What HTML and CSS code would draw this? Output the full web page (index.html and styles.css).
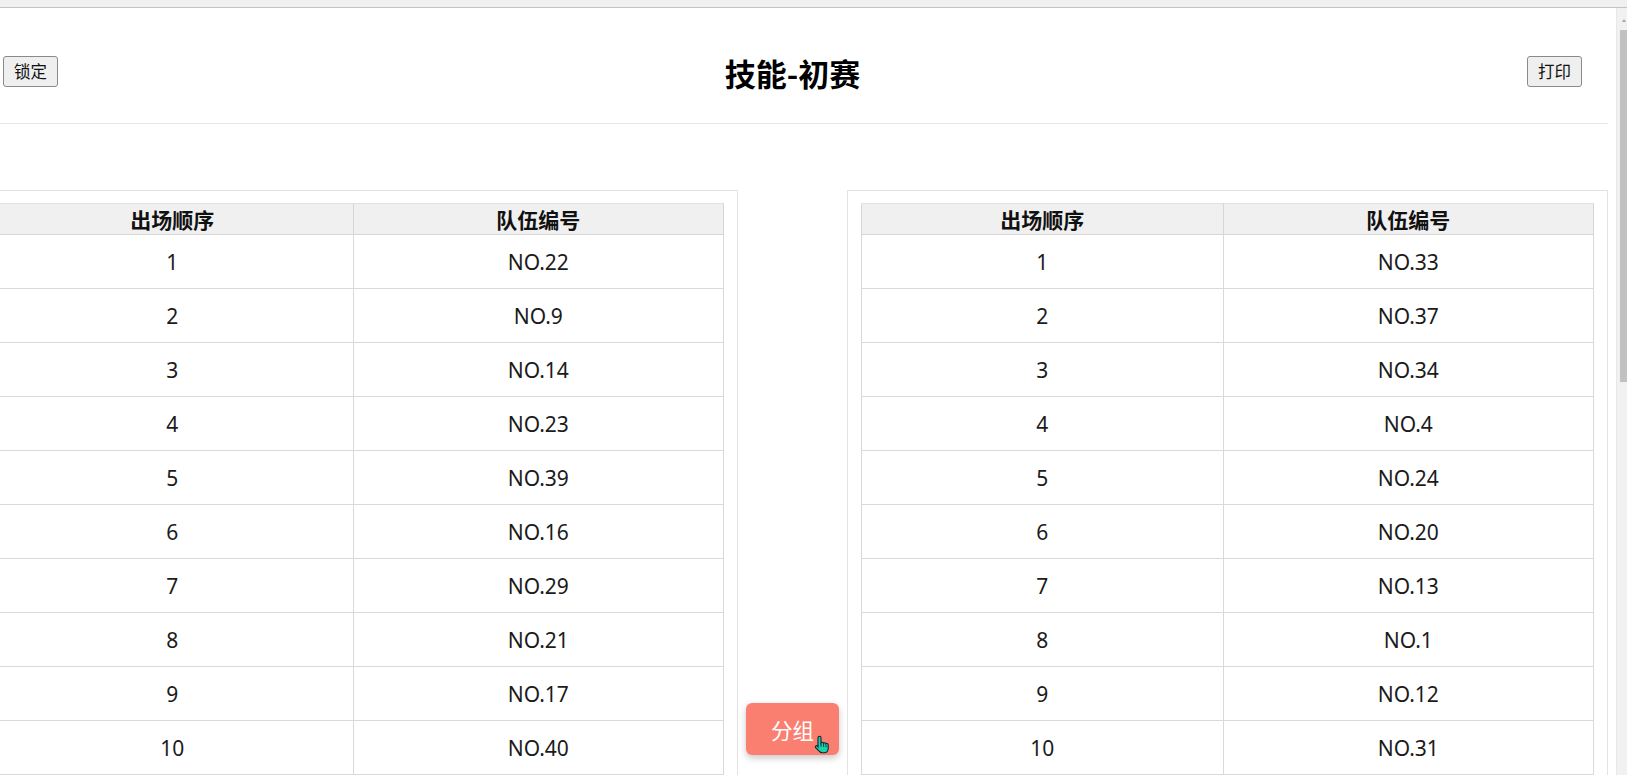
FILE: index.html
```html
<!DOCTYPE html>
<html lang="zh-CN">
<head>
<meta charset="utf-8">
<title>技能-初赛</title>
<link rel="stylesheet" href="styles.css">
</head>
<body>
<div class="topbar"></div>
<div class="viewport">
  <div class="page">
    <div class="container">
      <header class="header">
        <button class="btn-plain">锁定</button>
        <h1 class="title">技能-初赛</h1>
        <button class="btn-plain">打印</button>
      </header>
      <main class="groups">
        <section class="card">
          <table class="order-table">
            <thead><tr><th class="col-order">出场顺序</th><th>队伍编号</th></tr></thead>
            <tbody>
              <tr><td>1</td><td>NO.22</td></tr>
              <tr><td>2</td><td>NO.9</td></tr>
              <tr><td>3</td><td>NO.14</td></tr>
              <tr><td>4</td><td>NO.23</td></tr>
              <tr><td>5</td><td>NO.39</td></tr>
              <tr><td>6</td><td>NO.16</td></tr>
              <tr><td>7</td><td>NO.29</td></tr>
              <tr><td>8</td><td>NO.21</td></tr>
              <tr><td>9</td><td>NO.17</td></tr>
              <tr><td>10</td><td>NO.40</td></tr>
            </tbody>
          </table>
        </section>
        <div class="middle">
          <button class="btn-group">分组
            <svg class="cursor" viewBox="0 0 16 20" width="16" height="20">
              <path d="M5.5 1.2c.9 0 1.5.6 1.5 1.5v5.2c.3-.5.9-.7 1.5-.6.6.1 1 .5 1.1 1 .3-.4.9-.6 1.4-.5.6.1 1 .6 1 1.1.3-.3.8-.4 1.3-.3.6.2.9.7.9 1.3v3.6c0 2.3-1.6 4.3-4 4.3H8.4c-1.4 0-2.4-.6-3.2-1.7L1.6 12.6c-.4-.6-.3-1.3.3-1.7.6-.4 1.3-.3 1.7.2L4 11.7V2.7c0-.9.6-1.5 1.5-1.5z" fill="#19d3ae" stroke="#123" stroke-width="1.1"/>
              <path d="M7 8.2v3.5M9.6 9.2v2.6M12 10.3v1.8" stroke="#123" stroke-width=".9" fill="none"/>
            </svg>
          </button>
        </div>
        <section class="card">
          <table class="order-table">
            <thead><tr><th class="col-order">出场顺序</th><th>队伍编号</th></tr></thead>
            <tbody>
              <tr><td>1</td><td>NO.33</td></tr>
              <tr><td>2</td><td>NO.37</td></tr>
              <tr><td>3</td><td>NO.34</td></tr>
              <tr><td>4</td><td>NO.4</td></tr>
              <tr><td>5</td><td>NO.24</td></tr>
              <tr><td>6</td><td>NO.20</td></tr>
              <tr><td>7</td><td>NO.13</td></tr>
              <tr><td>8</td><td>NO.1</td></tr>
              <tr><td>9</td><td>NO.12</td></tr>
              <tr><td>10</td><td>NO.31</td></tr>
            </tbody>
          </table>
        </section>
      </main>
    </div>
  </div>
  <div class="scrollbar">
    <div class="sb-arrow"></div>
    <div class="sb-thumb"></div>
  </div>
</div>
</body>
</html>
```
FILE: styles.css
```css
html, body {
  margin: 0;
  padding: 0;
  height: 100%;
  overflow: hidden;
  background: #ffffff;
  font-family: "Noto Sans", "Noto Sans CJK SC", sans-serif;
  color: #1b1b1b;
}

.topbar {
  height: 7px;
  background: #f0f0f0;
  border-bottom: 1px solid #c4c4c4;
}

.viewport {
  display: flex;
  height: calc(100% - 8px);
}

.page {
  flex: 1;
  overflow: hidden;
  min-width: 0;
}

.container {
  margin-left: -23px;
  width: 1631px;
}

.header {
  display: flex;
  justify-content: space-between;
  align-items: center;
  height: 31px;
  padding: 48px 26px 36px;
  border-bottom: 1px solid #e6e6e6;
}

.btn-plain {
  font-family: "Noto Sans CJK SC", sans-serif;
  font-size: 16.5px;
  line-height: 20px;
  color: #111;
  background: #efefef;
  border: 1px solid #8a8a8a;
  border-radius: 3px;
  padding: 4px 6px 5px;
  width: 55px;
  height: 31px;
  margin: 0;
}

.title {
  margin: 0;
  font-family: "Noto Sans CJK SC", sans-serif;
  font-size: 31px;
  font-weight: 700;
  line-height: 29px;
  height: 31px;
  box-sizing: border-box;
  padding-top: 2px;
  color: #000;
}

.groups {
  display: flex;
  margin-top: 66px;
}

.card {
  width: 761px;
  box-sizing: border-box;
  border: 1px solid #e3e3e3;
  padding: 12px 13px 13px;
  flex: none;
}

.middle {
  flex: 1;
  display: flex;
  justify-content: center;
  padding-top: 513px;
}

.order-table {
  width: 100%;
  border-collapse: collapse;
  font-size: 21px;
  text-align: center;
}

.order-table th {
  background: #f0f0f0;
  font-family: "Noto Sans CJK SC", sans-serif;
  font-weight: 700;
  font-size: 21px;
  height: 30px;
  line-height: 26px;
  padding: 0;
  border: 1px solid #d6d6d6;
  border-top-color: #e2e2e2;
  color: #111;
}

.order-table .col-order {
  width: 49.4%;
}

.order-table td {
  height: 53px;
  padding: 0;
  border: 1px solid #d9d9d9;
  vertical-align: middle;
  color: #1b1b1b;
}

.btn-group {
  position: relative;
  width: 93px;
  height: 52px;
  border: none;
  border-radius: 6px;
  background: #fb7f70;
  color: #ffffff;
  font-family: "Noto Sans CJK SC", sans-serif;
  font-size: 21.5px;
  box-shadow: 0 3px 7px rgba(0, 0, 0, 0.22);
  padding: 0;
}

.cursor {
  position: absolute;
  left: 68px;
  top: 32px;
}

.scrollbar {
  width: 10px;
  flex: none;
  background: #f1f1f1;
  border-left: 1px solid #e8e8e8;
}

.sb-arrow {
  margin: 11px auto 0 5px;
  width: 0;
  height: 0;
  border-left: 2px solid transparent;
  border-right: 2px solid transparent;
  border-bottom: 3px solid #a3a3a3;
}

.sb-thumb {
  margin: 8px 0 0 3px;
  width: 7px;
  height: 352px;
  background: #c1c1c1;
}
```
